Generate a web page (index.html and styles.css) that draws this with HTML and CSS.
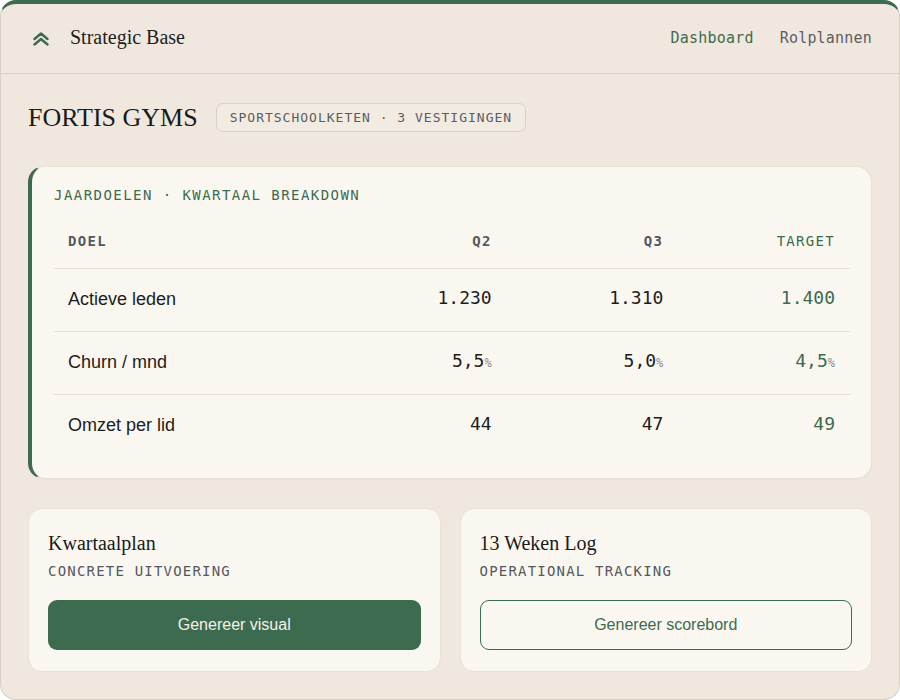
FILE: index.html
```html
<!DOCTYPE html>
<html lang="nl">
<head>
<meta charset="utf-8">
<title>Strategic Base</title>
<link rel="stylesheet" href="styles.css">
</head>
<body>
<div class="app">
  <header class="topbar">
    <div class="brand">
      <svg class="brand-icon" width="18" height="14" viewBox="0 0 18 14" aria-hidden="true">
        <path d="M2.5 7 L9 1.5 L15.5 7 M2.5 12.5 L9 7 L15.5 12.5" fill="none" stroke="#3d6b4f" stroke-width="2.4" stroke-linecap="round" stroke-linejoin="round"/>
      </svg>
      <span class="brand-name">Strategic Base</span>
    </div>
    <nav class="nav">
      <a class="nav-link active">Dashboard</a>
      <a class="nav-link">Rolplannen</a>
    </nav>
  </header>

  <main class="main">
    <div class="title-row">
      <h1 class="company">FORTIS GYMS</h1>
      <span class="badge">SPORTSCHOOLKETEN · 3 VESTIGINGEN</span>
    </div>

    <section class="goals-card">
      <div class="card-label">JAARDOELEN · KWARTAAL BREAKDOWN</div>
      <table class="goals">
        <colgroup>
          <col class="c-goal">
          <col class="c-num">
          <col class="c-num">
          <col class="c-num">
        </colgroup>
        <thead>
          <tr>
            <th>DOEL</th>
            <th class="num">Q2</th>
            <th class="num">Q3</th>
            <th class="num target">TARGET</th>
          </tr>
        </thead>
        <tbody>
          <tr>
            <td class="goal">Actieve leden</td>
            <td class="num">1.230</td>
            <td class="num">1.310</td>
            <td class="num target">1.400</td>
          </tr>
          <tr>
            <td class="goal">Churn / mnd</td>
            <td class="num">5,5<span class="unit">%</span></td>
            <td class="num">5,0<span class="unit">%</span></td>
            <td class="num target">4,5<span class="unit">%</span></td>
          </tr>
          <tr>
            <td class="goal">Omzet per lid</td>
            <td class="num">44</td>
            <td class="num">47</td>
            <td class="num target">49</td>
          </tr>
        </tbody>
      </table>
    </section>

    <div class="actions">
      <section class="action-card">
        <h2 class="action-title">Kwartaalplan</h2>
        <div class="action-sub">CONCRETE UITVOERING</div>
        <button class="btn btn-solid">Genereer visual</button>
      </section>
      <section class="action-card">
        <h2 class="action-title">13 Weken Log</h2>
        <div class="action-sub">OPERATIONAL TRACKING</div>
        <button class="btn btn-outline">Genereer scorebord</button>
      </section>
    </div>
  </main>
</div>
</body>
</html>
```

FILE: styles.css
```css
* { box-sizing: border-box; }

html, body {
  margin: 0;
  padding: 0;
  background: #ffffff;
}

.app {
  width: 900px;
  height: 700px;
  background: #f0e8de;
  border: 1px solid #d8d0c4;
  border-top: 4px solid #3d6b4f;
  border-radius: 16px;
  overflow: hidden;
  display: flex;
  flex-direction: column;
}

.topbar {
  height: 70px;
  flex: none;
  display: flex;
  align-items: center;
  justify-content: space-between;
  padding: 0 27px 2px 31px;
  border-bottom: 1px solid #d9d1c5;
}

.brand {
  display: flex;
  align-items: center;
  gap: 20px;
}

.brand-icon { display: block; margin-top: 2px; }

.brand-name {
  font-family: "Liberation Serif", serif;
  font-size: 20px;
  color: #1e1e1e;
}

.nav {
  display: flex;
  gap: 26px;
}

.nav-link {
  font-family: "DejaVu Sans Mono", monospace;
  font-size: 15px;
  letter-spacing: 0.2px;
  color: #5b5f66;
  cursor: pointer;
}

.nav-link.active { color: #3d6b4f; }

.main {
  padding: 28px 27px 28px 27px;
  display: flex;
  flex-direction: column;
}

.title-row {
  display: flex;
  align-items: center;
  gap: 18px;
  height: 31px;
}

.company {
  margin: 0;
  font-family: "Liberation Serif", serif;
  font-weight: 400;
  font-size: 26px;
  color: #1b1b1b;
}

.badge {
  font-family: "DejaVu Sans Mono", monospace;
  font-size: 13px;
  letter-spacing: 1px;
  color: #5a5d63;
  border: 1px solid #d8d0c4;
  background: #f2ebe1;
  border-radius: 7px;
  padding: 6px 13px 6px 13px;
}

.goals-card {
  margin-top: 33px;
  background: #faf7f0;
  border: 1px solid #e8e1d6;
  border-left: 4px solid #3d6b4f;
  border-radius: 16px;
  padding: 19px 21px 21px 22px;
  box-shadow: 0 1px 2px rgba(80, 60, 30, 0.04);
}

.card-label {
  font-family: "DejaVu Sans Mono", monospace;
  font-size: 14px;
  letter-spacing: 1.45px;
  color: #3d6b4f;
  line-height: 18px;
}

.goals {
  width: 100%;
  table-layout: fixed;
  margin-top: 10px;
  border-collapse: collapse;
}

.c-goal { width: 35.3%; }

.goals th {
  font-family: "DejaVu Sans Mono", monospace;
  font-size: 14px;
  font-weight: 700;
  letter-spacing: 1.3px;
  color: #55585e;
  text-align: left;
  padding: 17px 14px 17px 14px;
  line-height: 20px;
  border-bottom: 1px solid #e5ded3;
}

.goals th.num { text-align: right; padding-right: 15px; }
.goals th.target { color: #3d6b4f; font-weight: 400; }

.goals td {
  padding: 18px 14px 19px 14px;
  height: 62px;
  line-height: 25px;
  border-bottom: 1px solid #e5ded3;
}

.goals tbody tr:last-child td { border-bottom: none; }

.goals td.goal {
  font-family: "Liberation Sans", Arial, sans-serif;
  font-size: 18px;
  color: #1d1d1d;
}

.goals td.num {
  font-family: "DejaVu Sans Mono", monospace;
  font-size: 18px;
  text-align: right;
  padding-right: 15px;
  padding-top: 16px;
  padding-bottom: 21px;
  color: #1d1d1d;
}

.goals td.target { color: #3d6b4f; }

.unit {
  font-size: 12px;
  line-height: 1;
  color: #8a8a8a;
}

.actions {
  margin-top: 29px;
  display: grid;
  grid-template-columns: 1fr 1fr;
  gap: 19px;
}

.action-card {
  background: #faf7f0;
  border: 1px solid #e8e1d6;
  border-radius: 14px;
  padding: 22px 19px 21px 19px;
}

.action-title {
  margin: 0;
  font-family: "Liberation Serif", serif;
  font-weight: 400;
  font-size: 20px;
  line-height: 24px;
  color: #1b1b1b;
}

.action-sub {
  margin-top: 7px;
  font-family: "DejaVu Sans Mono", monospace;
  font-size: 14px;
  letter-spacing: 1.2px;
  color: #55585e;
  line-height: 18px;
}

.btn {
  display: block;
  width: 100%;
  margin-top: 20px;
  height: 50px;
  border-radius: 9px;
  font-family: "Liberation Sans", Arial, sans-serif;
  font-size: 16px;
  cursor: pointer;
}

.btn-solid {
  background: #3d6b4f;
  color: #f4f1ea;
  border: none;
}

.btn-outline {
  background: transparent;
  color: #3d6b4f;
  border: 1.5px solid #3d6b4f;
}
```
